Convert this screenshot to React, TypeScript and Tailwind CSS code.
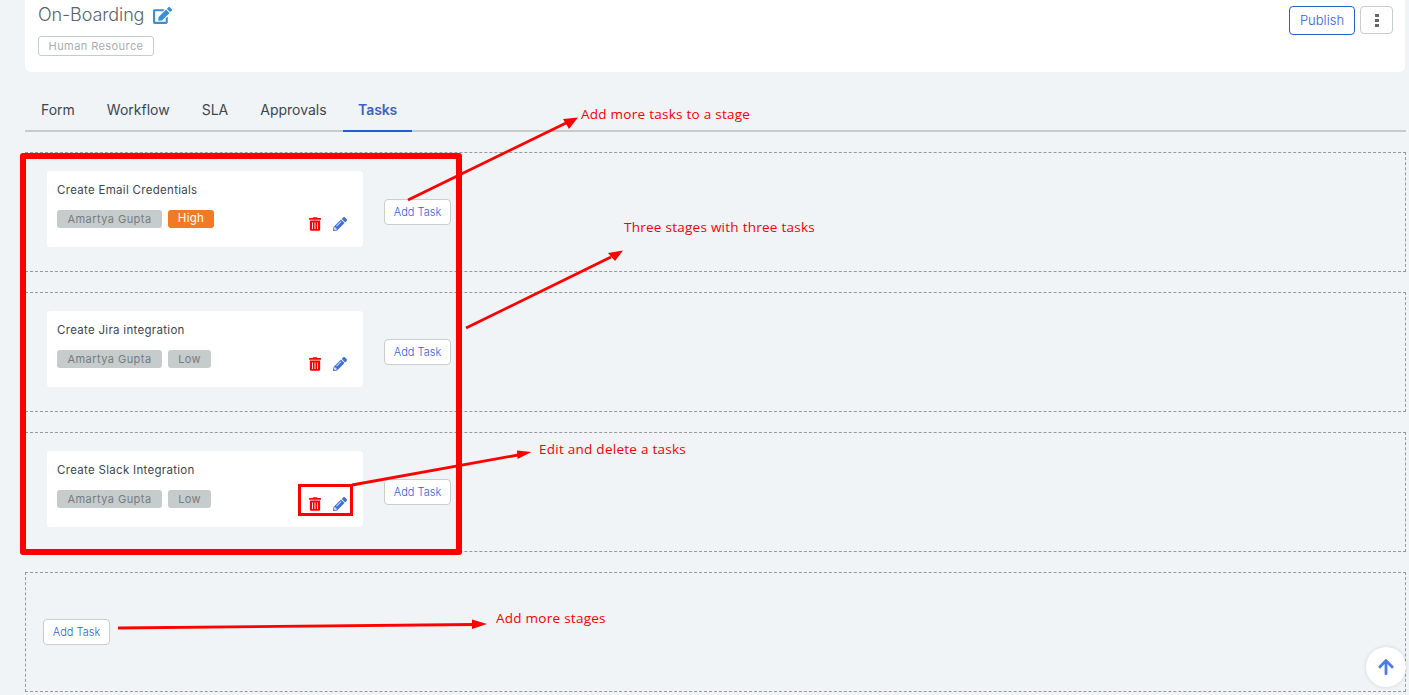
import React from 'react';
import { FaArrowUp, FaEdit, FaPencilAlt, FaTrashAlt } from 'react-icons/fa';

const stages = [
  { title: 'Create Email Credentials', priority: 'High' },
  { title: 'Create Jira integration', priority: 'Low' },
  { title: 'Create Slack Integration', priority: 'Low' },
];

const tabs = ['Form', 'Workflow', 'SLA', 'Approvals', 'Tasks'];

const AddTask = () => (
  <button className="h-[26px] w-[67px] shrink-0 rounded-[4px] border border-[#c8cfcf] bg-white text-[11px] font-light text-[#2f62d8]">
    Add Task
  </button>
);

const TaskCard = ({ title, priority }: { title: string; priority: string }) => (
  <div className="flex h-[76px] w-[316px] shrink-0 flex-col rounded-[4px] bg-white pl-[10px] pr-[16px] pt-[12px]">
    <div className="text-[11.5px] leading-[14px] tracking-[0.3px] text-[#3d4650]">{title}</div>
    <div className="mt-[13px] flex items-start justify-between">
      <div className="flex gap-[6px]">
        <span className="flex h-[18px] w-[105px] items-center justify-center rounded-[3px] bg-[#c6cccc] text-[11px] tracking-[0.45px] text-[#757b7f]">
          Amartya Gupta
        </span>
        <span
          className={
            priority === 'High'
              ? 'flex h-[18px] w-[46px] items-center justify-center rounded-[3px] bg-[#f27a24] text-[11.5px] tracking-[0.3px] text-white'
              : 'flex h-[18px] w-[43px] items-center justify-center rounded-[3px] bg-[#c6cccc] text-[11px] tracking-[0.3px] text-[#757b7f]'
          }
        >
          {priority}
        </span>
      </div>
      <div className="mt-[7px] flex items-center gap-[12px]">
        <FaTrashAlt className="h-[14px] w-[12px] text-[#ff0000]" />
        <FaPencilAlt className="h-[14px] w-[14px] text-[#3f6fd8]" />
      </div>
    </div>
  </div>
);

const Note = ({ className, children }: { className: string; children: string }) => (
  <div className={`absolute whitespace-nowrap font-['Open_Sans',sans-serif] text-[13.5px] leading-[16px] tracking-[0.26px] text-[#f50000] ${className}`}>
    {children}
  </div>
);

export default function App() {
  return (
    <div className="relative h-[695px] w-[1409px] overflow-hidden bg-[#f0f4f7] font-['Inter','Noto_Sans',sans-serif]">
      <div className="ml-[25px] flex h-[72px] w-[1380px] justify-between rounded-b-[6px] bg-white pl-[13px] pr-[12px] pt-[6px]">
        <div>
          <div className="flex h-[18px] items-center gap-[9px]">
            <span className="text-[18px] font-light leading-[18px] tracking-[-0.1px] text-[#5a646e]">On-Boarding</span>
            <FaEdit className="h-[17px] w-[19px] text-[#3a8fd8]" />
          </div>
          <span className="mt-[12px] flex h-[20px] w-[116px] items-center justify-center rounded-[3px] border border-[#c6cccc] text-[11px] tracking-[0.42px] text-[#a6adb2]">
            Human Resource
          </span>
        </div>
        <div className="flex items-start gap-[5px]">
          <button className="h-[29px] w-[66px] rounded-[4px] border border-[#1f5fd0] text-[13px] font-light text-[#2f62d8]">
            Publish
          </button>
          <button className="flex h-[28px] w-[33px] flex-col items-center justify-center gap-[2px] rounded-[4px] border border-[#c8cccc]">
            <span className="h-[3px] w-[4px] bg-[#666666]" />
            <span className="h-[3px] w-[4px] bg-[#666666]" />
            <span className="h-[3px] w-[4px] bg-[#666666]" />
          </button>
        </div>
      </div>

      <div className="ml-[25px] mr-[3px] flex h-[60px] items-end border-b-2 border-[#c6cccc]">
        {tabs.map((tab) => (
          <div
            key={tab}
            className={
              tab === 'Tasks'
                ? '-mb-[2px] flex h-[42px] w-[69px] items-center justify-center border-b-2 border-[#1f5fd0] pb-[1px] pl-[1px] text-[14px] font-semibold tracking-[-0.1px] text-[#3f5fc8]'
                : 'flex h-[40px] items-center px-[16px] pb-[1px] text-[14px] text-[#3d4650]'
            }
          >
            {tab}
          </div>
        ))}
      </div>

      <div className="ml-[25px] mr-[3px] mt-[20px] flex flex-col gap-[20px]">
        {stages.map((stage) => (
          <div key={stage.title} className="flex h-[120px] items-center gap-[21px] border border-dashed border-[#999999] pl-[21px]">
            <div className="self-start pt-[18px]">
              <TaskCard title={stage.title} priority={stage.priority} />
            </div>
            <AddTask />
          </div>
        ))}
        <div className="flex h-[120px] items-center border border-dashed border-[#999999] pl-[17px]">
          <AddTask />
        </div>
      </div>

      {/* scroll to top */}
      <div className="absolute left-[1366px] top-[647px] flex h-[40px] w-[40px] items-center justify-center rounded-full bg-white shadow-[0_0_4px_rgba(0,0,0,0.12)]">
        <FaArrowUp className="h-[18px] w-[18px] text-[#4a7de0]" />
      </div>

      {/* annotations drawn on top of the screenshot */}
      <div className="absolute left-[20px] top-[153px] h-[402px] w-[442px] rounded-[3px] border-[6px] border-[#ff0000]" />
      <div className="absolute left-[298px] top-[484px] h-[32px] w-[55px] border-[3px] border-[#ff0000]" />
      <svg className="absolute left-0 top-0" width="1409" height="695" fill="none">
        <g stroke="#ff0000" strokeWidth="2.8">
          <line x1="408" y1="200" x2="566" y2="123" />
          <line x1="466" y1="328" x2="611" y2="257" />
          <line x1="352" y1="485" x2="518" y2="455" />
          <line x1="118" y1="628" x2="474" y2="624.5" />
        </g>
        <g fill="#ff0000">
          <polygon points="578,117.5 563,119 569,129" />
          <polygon points="623,250.5 608,253 615,261" />
          <polygon points="531.5,452 517,450.5 517.5,459" />
          <polygon points="487,624 472,619.5 472,629" />
        </g>
      </svg>
      <Note className="left-[581px] top-[106px]">Add more tasks to a stage</Note>
      <Note className="left-[624px] top-[219px]">Three stages with three tasks</Note>
      <Note className="left-[539px] top-[441px]">Edit and delete a tasks</Note>
      <Note className="left-[496px] top-[610px]">Add more stages</Note>
    </div>
  );
}
